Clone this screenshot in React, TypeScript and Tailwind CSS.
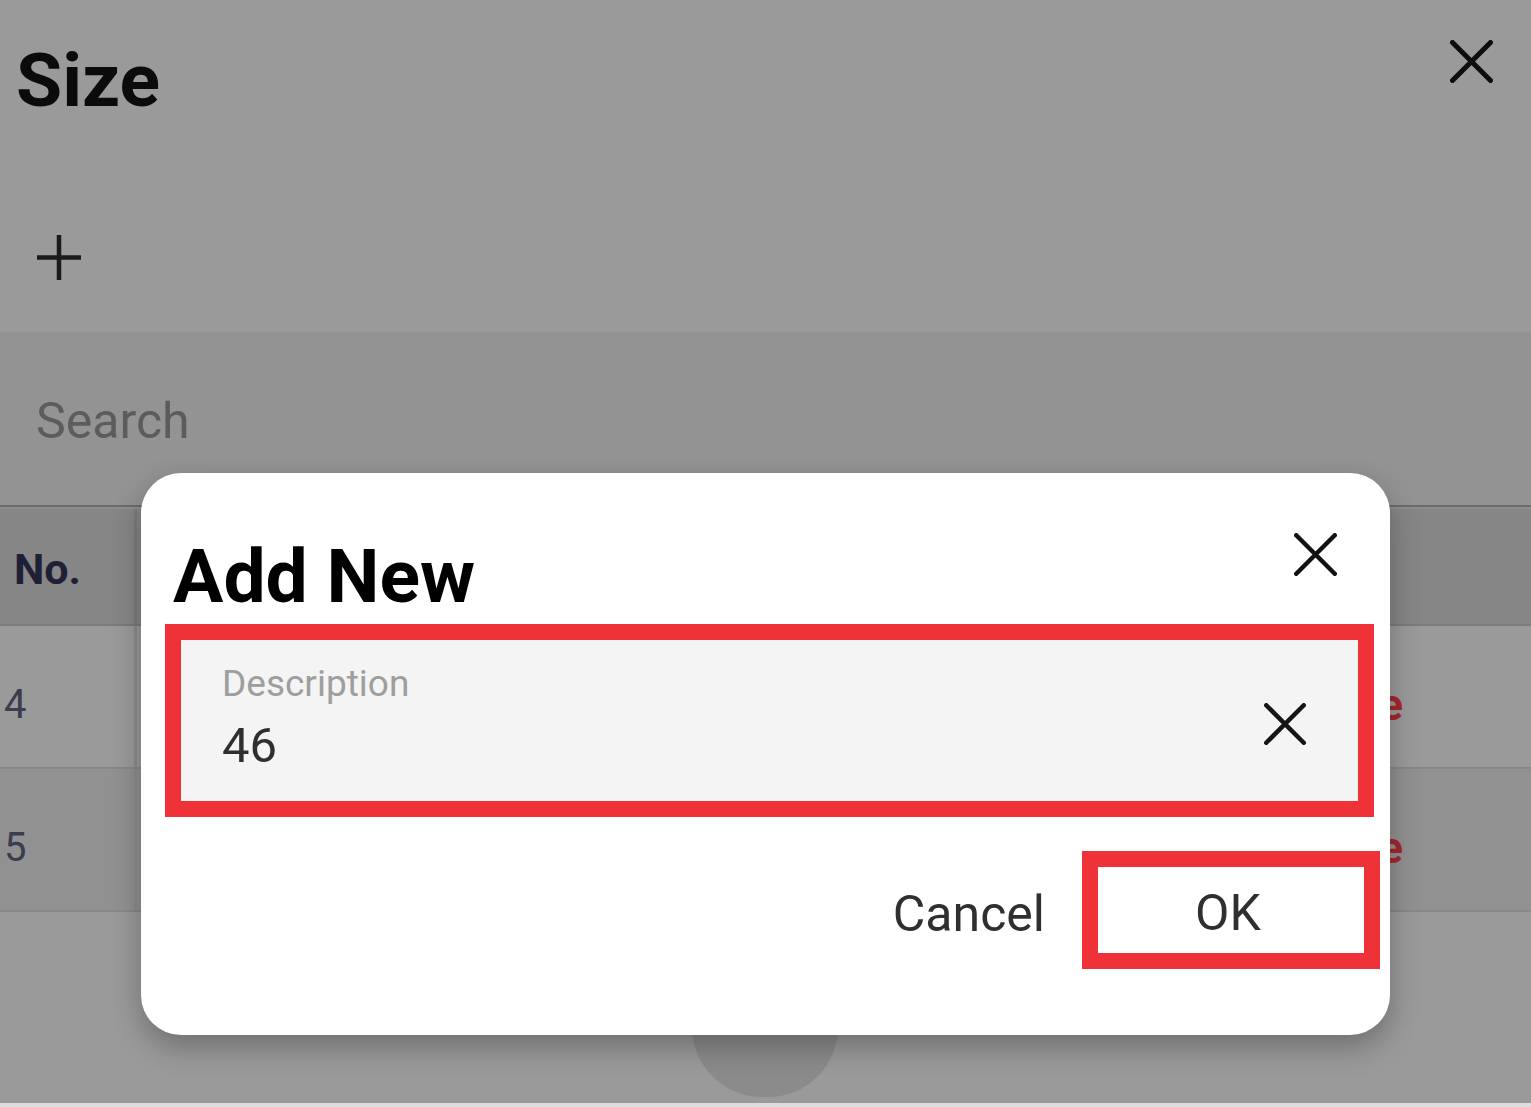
import React from "react";

const Cross = ({ size, stroke, color = "#111" }: { size: number; stroke: number; color?: string }) => (
  <svg width={size} height={size} viewBox={`0 0 ${size} ${size}`} fill="none">
    <path
      d={`M${stroke / 2} ${stroke / 2} L${size - stroke / 2} ${size - stroke / 2} M${size - stroke / 2} ${stroke / 2} L${stroke / 2} ${size - stroke / 2}`}
      stroke={color}
      strokeWidth={stroke}
      strokeLinecap="round"
    />
  </svg>
);

const rows = [
  { no: "4", bg: "bg-[#9a9a9a]" },
  { no: "5", bg: "bg-[#919191]" },
];

const App = () => {
  return (
    <div
      className="relative w-[1531px] h-[1107px] overflow-hidden bg-[#9a9a9a]"
      style={{ fontFamily: "Roboto, 'Noto Sans', sans-serif" }}
    >
      {/* page behind the overlay */}
      <div className="flex flex-col h-[1103px]">
        <div className="h-[332px] bg-[#9a9a9a] flex flex-col">
          <div className="flex justify-between items-start">
            <h1 className="pl-[16px] pt-[36px] text-[75px] leading-[88px] font-bold text-[#0b0b0b]">Size</h1>
            <div className="mt-[40px] mr-[38px]">
              <Cross size={43} stroke={5} color="#0d0d0d" />
            </div>
          </div>
          <div className="pl-[37px] mt-[111px]">
            <svg width="44" height="45" viewBox="0 0 44 45">
              <path d="M22 0 V45 M0 22.5 H44" stroke="#1a1a1a" strokeWidth="4.5" />
            </svg>
          </div>
        </div>
        <div className="h-[173px] bg-[#939393] pl-[36px] pt-[60px]">
          <span className="text-[50px] leading-[59px] text-[#5c5c5c]">Search</span>
        </div>
        <div className="h-[2px] bg-[#6c6c6c]" />
        <div className="h-[2px] bg-[#8e8e8e]" />
        <div className="h-[117px] bg-[#868686] flex border-b-[2px] border-[#7b7b7b]">
          <div className="w-[137px] border-r-[3px] border-[#7c7c7c] pl-[14px] pt-[35px]">
            <span className="text-[43px] leading-[50px] font-bold text-[#1f2035]">No.</span>
          </div>
          <div className="flex-1" />
        </div>
        {rows.map((r) => (
          <div key={r.no} className={`h-[143px] ${r.bg} flex border-b-[2px] border-[#888888] pt-[16px]`}>
            <div className="w-[137px] border-r-[3px] border-[#8c8c8c] mt-[-16px] pt-[16px] pl-[4px] flex items-center">
              <span className="text-[40px] text-[#3b3d4c]">{r.no}</span>
            </div>
            <div className="flex-1" />
            <div className="pr-[128px] flex items-center">
              <span className="text-[44px] font-bold text-[#a3282c]">Delete</span>
            </div>
          </div>
        ))}
        <div className="flex-1 flex justify-center pt-[45px]">
          <div className="w-[146px] h-[140px] rounded-full bg-[#8b8b8b] ml-[-2px]" />
        </div>
      </div>
      <div className="h-[4px] bg-[#dcdcdc]" />

      {/* dialog */}
      <div className="absolute left-[141px] top-[473px] w-[1249px] rounded-[40px] bg-white shadow-[0_12px_30px_rgba(0,0,0,0.28)] pt-[59px] pb-[66px]">
        <div className="flex justify-between items-start pl-[32px] pr-[53px]">
          <h2 className="text-[75px] leading-[88px] font-bold text-black">Add New</h2>
          <div className="mt-[1px]">
            <Cross size={43} stroke={4.5} color="#111" />
          </div>
        </div>
        <div className="ml-[24px] mt-[4px] w-[1209px] h-[193px] border-[16px] border-[#ee3237]">
          <div className="h-full bg-[#f4f4f4] flex items-center pl-[41px] pr-[52px]">
            <div className="flex-1 flex flex-col mt-[-6px]">
              <span className="text-[37px] leading-[43px] text-[#9e9e9e]">Description</span>
              <span className="mt-[12px] text-[49px] leading-[57px] text-[#2f2f2f]">46</span>
            </div>
            <div className="mt-[6px]">
              <Cross size={42} stroke={4.5} color="#151515" />
            </div>
          </div>
        </div>
        <div className="flex justify-end items-center mt-[34px] pr-[10px]">
          <span className="text-[50px] leading-[59px] text-[#2f2f2f] mr-[37px] mt-[8px]">Cancel</span>
          <div className="w-[298px] h-[118px] border-[16px] border-[#ee3237] flex items-center justify-center">
            <span className="text-[50px] leading-[59px] text-[#2f2f2f] ml-[-6px] mt-[6px]">OK</span>
          </div>
        </div>
      </div>
    </div>
  );
};

export default App;
